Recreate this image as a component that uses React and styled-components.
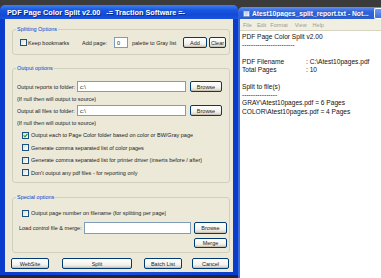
import React from 'react';
import styled, { createGlobalStyle } from 'styled-components';

const GlobalStyle = createGlobalStyle`
    html, body {
        margin: 0;
        padding: 0;
        background: #2b2e35;
    }
    body {
        width: 381px;
        height: 278px;
        overflow: hidden;
        font-family: "Liberation Sans", Arial, sans-serif;
    }
`;

const Desktop = styled.div`
    display: flex;
    align-items: flex-start;
    width: 381px;
    height: 278px;
    overflow: hidden;
    background: linear-gradient(#3b3b3b, #22262e);
`;

const Window = styled.div`
    flex: 0 0 238px;
    margin-top: 5px;
    height: 270px;
    display: flex;
    flex-direction: column;
    background: linear-gradient(90deg, #0a3ccc, #1b4fd8 50%, #0a3ccc);
    border-radius: 5px 5px 0 0;
    position: relative;
    z-index: 2;
`;

const TitleBar = styled.div`
    height: 14px;
    flex: 0 0 14px;
    display: flex;
    align-items: center;
    padding-left: 7px;
    border-radius: 5px 5px 0 0;
    background: linear-gradient(#3d80f2, #1a57e0 35%, #114ad6 70%, #1a55dc);
`;

const TitleText = styled.span`
    color: #fff;
    font-weight: bold;
    font-size: 7.3px;
    white-space: pre;
    text-shadow: 1px 1px 0 #0a2a8a;
`;

const Client = styled.div`
    flex: 1;
    margin: 0 5px 3px 5px;
    background: #ece9d8;
    display: flex;
    flex-direction: column;
    font-size: 5.5px;
    color: #1c1c1c;
`;

const Group = styled.fieldset`
    margin: ${p => p.$mt}px 3px 0 7px;
    padding: ${p => p.$pt}px 0 ${p => p.$pb}px 0;
    border: 1px solid #d0d0bf;
    border-radius: 3px;
    min-width: 0;
`;

const Legend = styled.legend`
    padding: 0 1px;
    margin-left: 3px;
    line-height: 6px;
    font-size: 5.5px;
    color: #0046d5;
`;

const Row = styled.div`
    display: flex;
    align-items: center;
    height: ${p => p.$h}px;
    margin-top: ${p => p.$mt || 0}px;
`;

const Text = styled.span`
    flex: 0 0 ${p => (p.$w ? `${p.$w}px` : 'auto')};
    margin-left: ${p => p.$ml || 0}px;
    white-space: nowrap;
    overflow: hidden;
`;

const TextBox = styled.div`
    flex: 0 0 ${p => p.$w}px;
    box-sizing: border-box;
    height: ${p => p.$h || 11}px;
    margin-left: ${p => p.$ml || 0}px;
    background: #fff;
    border: 1px solid #7f9db9;
    padding-left: 2px;
    display: flex;
    align-items: center;
    font-size: 5.5px;
`;

const Button = styled.div`
    flex: 0 0 ${p => p.$w}px;
    box-sizing: border-box;
    height: ${p => p.$h || 11}px;
    margin-left: ${p => p.$ml || 0}px;
    border: 1px solid #003c74;
    border-radius: 2px;
    background: linear-gradient(#ffffff, #f4f3ee 60%, #d6d0c5);
    box-shadow: inset 0 -1px 0 #c9c3b5;
    display: flex;
    align-items: center;
    justify-content: center;
    font-size: 5.5px;
    white-space: nowrap;
    overflow: hidden;
`;

const Box = styled.span`
    flex: 0 0 7px;
    box-sizing: border-box;
    width: 7px;
    height: 7px;
    margin-left: ${p => p.$ml || 0}px;
    border: 1px solid #1c5180;
    background: linear-gradient(135deg, #dcdcd6, #ffffff);
    display: flex;
    align-items: center;
    justify-content: center;
`;

const Footer = styled.div`
    display: flex;
    margin-top: 5px;
`;

const CheckBox = ({ checked, ml }) => (
    <Box $ml={ml}>
        {checked ? (
            <svg width="5" height="5" viewBox="0 0 5 5">
                <path d="M0.6 2.4 L2 3.8 L4.4 1" stroke="#21a121" strokeWidth="1.2" fill="none" />
            </svg>
        ) : null}
    </Box>
);

const CheckRow = ({ checked, children, h = 12.5, mt }) => (
    <Row $h={h} $mt={mt}>
        <CheckBox checked={checked} ml={9} />
        <Text $ml={2}>{children}</Text>
    </Row>
);

const Notepad = styled.div`
    flex: 1;
    margin-top: 7px;
    height: 280px;
    display: flex;
    flex-direction: column;
    background: #3a6ddb;
    border-radius: 5px 0 0 0;
`;

const NpTitle = styled.div`
    flex: 0 0 12px;
    display: flex;
    align-items: center;
    padding-left: 5px;
    border-radius: 5px 0 0 0;
    background: linear-gradient(#5f90f0, #2f64dc 40%, #2a5ed6);
`;

const NpTitleText = styled.span`
    margin-left: 2px;
    flex: 1;
    color: #fff;
    font-weight: bold;
    font-size: 6.7px;
    white-space: nowrap;
    overflow: hidden;
    text-shadow: 1px 1px 0 #2a4fa6;
`;

const MinButton = styled.span`
    flex: 0 0 6px;
    height: 9px;
    margin-left: 4px;
    border: 1px solid #fff;
    border-right: none;
    border-radius: 2px 0 0 2px;
    background: linear-gradient(#6f9cf3, #3d6edb);
`;

const NpBody = styled.div`
    flex: 1;
    display: flex;
    flex-direction: column;
    margin-left: 2px;
    background: #fff;
`;

const NpMenu = styled.div`
    flex: 0 0 11px;
    display: flex;
    align-items: center;
    background: #f1efe2;
    border-bottom: 1px solid #d8d4c2;
    font-size: 5.5px;
    color: #9a9a92;
`;

const MenuItem = styled.span`
    margin-left: ${p => p.$ml}px;
`;

const NpText = styled.div`
    padding: 2px 0 0 2px;
    font-size: 6.6px;
    line-height: 8.3px;
    color: #111;
    white-space: pre;
`;

const NpLine = styled.div`
    display: flex;
    height: 8.3px;
`;

const NpKey = styled.span`
    flex: 0 0 64px;
`;

const NotepadIcon = () => (
    <svg width="7" height="8" viewBox="0 0 7 8">
        <rect x="0.5" y="1" width="6" height="6.5" fill="#f4f8ff" stroke="#6d84a8" strokeWidth="0.6" />
        <rect x="0.5" y="0.5" width="6" height="1.8" fill="#3a6fd0" />
        <path d="M1.5 3.6 H5.5 M1.5 4.8 H5.5 M1.5 6 H4.5" stroke="#8aa2c8" strokeWidth="0.5" />
    </svg>
);

const App = () => {
    return (
        <>
            <GlobalStyle />
            <Desktop>
                <Window>
                    <TitleBar>
                        <TitleText>{'PDF Page Color Split v2.00   -= Traction Software =-'}</TitleText>
                    </TitleBar>
                    <Client>
                        <Group $mt={7} $pt={5} $pb={6}>
                            <Legend>Splitting Options</Legend>
                            <Row $h={11}>
                                <CheckBox ml={7} />
                                <Text $ml={1} $w={54}>Keep bookmarks</Text>
                                <Text $w={32}>Add page:</Text>
                                <TextBox $w={14}>0</TextBox>
                                <Text $ml={4} $w={51}>palette to Gray list</Text>
                                <Button $w={24}>Add</Button>
                                <Button $ml={2} $w={17}>Clear</Button>
                            </Row>
                        </Group>

                        <Group $mt={10} $pt={10} $pb={3}>
                            <Legend>Output options</Legend>
                            <Row $h={11}>
                                <Text $ml={4} $w={60}>Output reports to folder:</Text>
                                <TextBox $w={109}>c:\</TextBox>
                                <Button $ml={4} $w={32}>Browse</Button>
                            </Row>
                            <Row $h={13}>
                                <Text $ml={4}>(If null then will output to source)</Text>
                            </Row>
                            <Row $h={11}>
                                <Text $ml={4} $w={60}>Output all files to folder:</Text>
                                <TextBox $w={109}>c:\</TextBox>
                                <Button $ml={4} $w={32}>Browse</Button>
                            </Row>
                            <Row $h={13}>
                                <Text $ml={4}>(If null then will output to source)</Text>
                            </Row>
                            <CheckRow checked>Output each to Page Color folder based on color or BW/Gray page</CheckRow>
                            <CheckRow>Generate comma separated list of color pages</CheckRow>
                            <CheckRow>Generate comma separated list for printer driver (inserts before / after)</CheckRow>
                            <CheckRow>Don't output any pdf files - for reporting only</CheckRow>
                        </Group>

                        <Group $mt={11} $pt={7} $pb={4}>
                            <Legend>Special options</Legend>
                            <CheckRow h={12}>Output page number on filename (for splitting per page)</CheckRow>
                            <Row $h={12} $mt={3}>
                                <Text $ml={6} $w={65}>Load control file &amp; merge:</Text>
                                <TextBox $w={107} $h={12} />
                                <Button $ml={3} $w={33} $h={12}>Browse</Button>
                            </Row>
                            <Row $h={10} $mt={4}>
                                <Button $ml={181} $w={33} $h={10}>Merge</Button>
                            </Row>
                        </Group>

                        <Footer>
                            <Button $ml={6} $w={38}>WebSite</Button>
                            <Button $ml={13} $w={70}>Split</Button>
                            <Button $ml={12} $w={38}>Batch List</Button>
                            <Button $ml={10} $w={37}>Cancel</Button>
                        </Footer>
                    </Client>
                </Window>

                <Notepad>
                    <NpTitle>
                        <NotepadIcon />
                        <NpTitleText>Atest10pages_split_report.txt - Not...</NpTitleText>
                        <MinButton />
                    </NpTitle>
                    <NpBody>
                        <NpMenu>
                            <MenuItem $ml={3}>File</MenuItem>
                            <MenuItem $ml={5}>Edit</MenuItem>
                            <MenuItem $ml={4}>Format</MenuItem>
                            <MenuItem $ml={7}>View</MenuItem>
                            <MenuItem $ml={6}>Help</MenuItem>
                        </NpMenu>
                        <NpText>
                            <NpLine>PDF Page Color Split v2.00</NpLine>
                            <NpLine>------------------------</NpLine>
                            <NpLine />
                            <NpLine><NpKey>PDF Filename</NpKey>: C:\Atest10pages.pdf</NpLine>
                            <NpLine><NpKey>Total Pages</NpKey>: 10</NpLine>
                            <NpLine />
                            <NpLine>Split to file(s)</NpLine>
                            <NpLine>----------------</NpLine>
                            <NpLine>GRAY\Atest10pages.pdf = 6 Pages</NpLine>
                            <NpLine>COLOR\Atest10pages.pdf = 4 Pages</NpLine>
                        </NpText>
                    </NpBody>
                </Notepad>
            </Desktop>
        </>
    );
};

export default App;
